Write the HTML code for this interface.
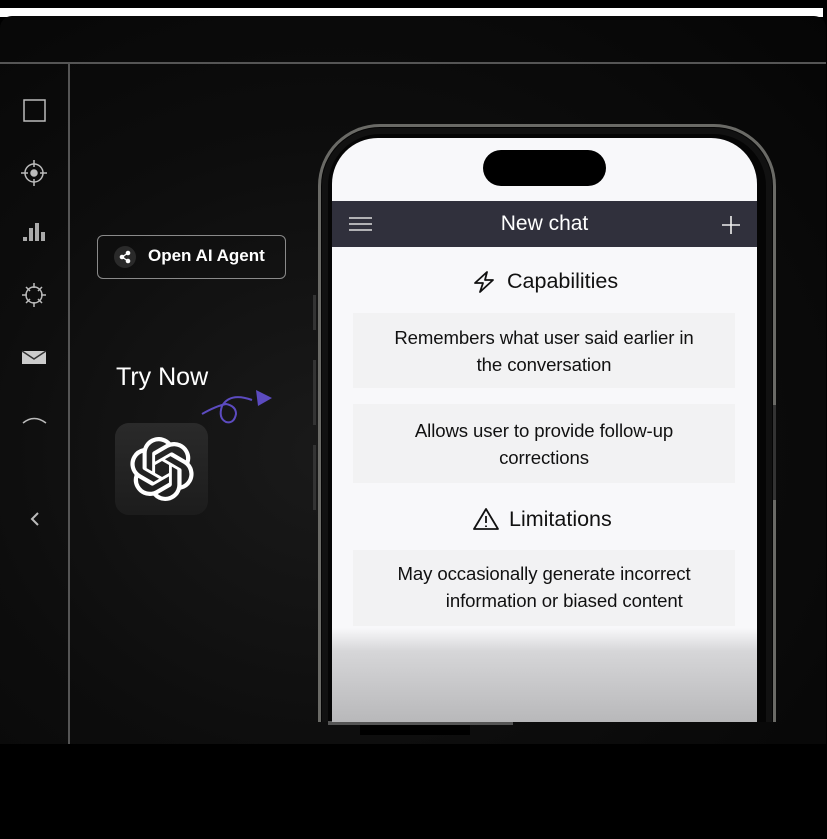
<!DOCTYPE html><html><head><style>
*{margin:0;padding:0;box-sizing:border-box}
body{width:827px;height:839px;background:#000;position:relative;overflow:hidden;font-family:"Liberation Sans",sans-serif}
.abs{position:absolute}
.card{left:0;top:16px;width:826px;height:728px;border-radius:12px 12px 0 0;background:radial-gradient(ellipse at 40% 60%,#1a1a1a 0%,#0d0d0d 50%,#050505 100%);overflow:hidden}
.screen{left:332px;top:138px;width:425px;height:584px;background:#f8f8fa;border-radius:46px 46px 0 0;overflow:hidden}
.box{position:absolute;left:21px;width:382px;background:#f2f2f3;text-align:center;color:#111;font-size:18.6px;line-height:27px;letter-spacing:-0.1px}
</style></head><body>
<div class="abs" style="left:0;top:8px;width:823px;height:9px;background:#fff"></div>
<div class="abs card"></div>
<div class="abs" style="left:0;top:62px;width:826px;height:2px;background:#555"></div>
<div class="abs" style="left:68px;top:63px;width:2px;height:681px;background:#555"></div>
<svg class="abs" style="left:0;top:90px" width="70" height="450" fill="none" stroke="#bbb" stroke-width="1.5">
<rect x="24" y="10" width="21" height="21"/>
<circle cx="34" cy="83" r="9"/><circle cx="34" cy="83" r="3" fill="#bbb"/><path d="M34 70v7M34 89v7M21 83h7M40 83h7"/>
<path d="M25 151v-4M31 151v-13M37 151v-18M43 151v-9" stroke-width="4" stroke="#aaa"/>
<circle cx="34" cy="205" r="8"/><path d="M34 193v5M34 212v5M22 205h5M41 205h5M26 197l4 4M42 197l-4 4M26 213l4-4M42 213l-4-4"/>
<path d="M22 261h24v13H22z" fill="#ccc" stroke="none"/><path d="M22 261l12 8 12-8" stroke="#333"/>
<path d="M23 333q11-9 23 0"/>
<path d="M38 423l-6 6 6 6" stroke-width="2"/>
</svg>
<div class="abs" style="left:97px;top:235px;width:189px;height:44px;border:1.5px solid #8a8a8a;border-radius:6px"></div>
<div class="abs" style="left:114px;top:246px;width:22px;height:22px;border-radius:50%;background:#2a2a2a"></div>
<svg class="abs" style="left:114px;top:246px" width="22" height="22"><circle cx="14" cy="7" r="2.3" fill="#fff"/><circle cx="8" cy="11" r="2.3" fill="#fff"/><circle cx="14" cy="15" r="2.3" fill="#fff"/><path d="M14 7L8 11L14 15" stroke="#fff" stroke-width="1.3" fill="none"/></svg>
<div class="abs" style="left:148px;top:246px;color:#fff;font-weight:bold;font-size:17px">Open AI Agent</div>
<div class="abs" style="left:116px;top:363px;color:#fff;font-size:25px">Try Now</div>
<svg class="abs" style="left:198px;top:380px" width="80" height="50" fill="none" stroke="#5c4bc0" stroke-width="2"><path d="M4 34q14-8 24-10q10 2 10 10q-2 10-10 8q-8-4-4-16q8-14 30-6"/><path d="M58 10l16 8-14 8z" fill="#5c4bc0" stroke="none"/></svg>
<div class="abs" style="left:115px;top:423px;width:93px;height:92px;border-radius:14px;background:linear-gradient(#2a2a2a,#1c1c1c)"></div>
<svg class="abs" style="left:130px;top:437px" width="64" height="64" viewBox="0 0 24 24"><path fill="#fff" d="M22.28 9.820a5.98 5.98 0 0 0-.52-4.91 6.05 6.05 0 0 0-6.51-2.9A6.070 6.070 0 0 0 4.980 4.180a5.98 5.98 0 0 0-4 2.9 6.05 6.05 0 0 0 .74 7.1 5.98 5.98 0 0 0 .51 4.91 6.05 6.05 0 0 0 6.52 2.9A5.98 5.98 0 0 0 13.26 24a6.06 6.06 0 0 0 5.77-4.21 5.99 5.99 0 0 0 4-2.9 6.06 6.06 0 0 0-.75-7.07zm-9.02 12.61a4.48 4.48 0 0 1-2.88-1.04l.14-.08 4.78-2.76a.8.8 0 0 0 .39-.68v-6.74l2.02 1.17a.07.07 0 0 1 .04.05v5.58a4.5 4.5 0 0 1-4.49 4.5zm-9.66-4.13a4.47 4.47 0 0 1-.53-3.01l.14.09 4.78 2.76a.77.77 0 0 0 .78 0l5.84-3.37v2.33a.08.08 0 0 1-.03.06L9.74 19.95a4.5 4.5 0 0 1-6.14-1.65zM2.34 7.9a4.49 4.49 0 0 1 2.37-1.97v5.68a.77.77 0 0 0 .39.68l5.81 3.35-2.02 1.17a.08.08 0 0 1-.07 0l-4.83-2.79A4.5 4.5 0 0 1 2.34 7.87zm16.6 3.86L13.1 8.36 15.12 7.2a.08.08 0 0 1 .07 0l4.83 2.79a4.49 4.49 0 0 1-.68 8.1v-5.68a.79.79 0 0 0-.41-.67zm2.01-3.02l-.14-.09-4.77-2.78a.78.78 0 0 0-.79 0L9.41 9.23V6.9a.07.07 0 0 1 .03-.06l4.83-2.79a4.5 4.5 0 0 1 6.68 4.66zM8.31 12.86l-2.02-1.16a.08.08 0 0 1-.04-.06V6.08a4.5 4.5 0 0 1 7.38-3.45l-.14.08-4.78 2.76a.8.8 0 0 0-.39.68zm1.1-2.37l2.6-1.5 2.61 1.5v3l-2.6 1.5-2.61-1.5z"/></svg>
<!-- phone -->
<div class="abs" style="left:318px;top:124px;width:458px;height:598px;border-radius:62px 62px 0 0;border:3px solid #6a6a66;border-bottom:none;background:#050505"></div>
<div class="abs" style="left:322px;top:128px;width:450px;height:594px;border-radius:58px 58px 0 0;border:6px solid #111;border-bottom:none"></div>
<div class="abs" style="left:328px;top:721px;width:185px;height:4px;background:#555"></div>
<div class="abs" style="left:360px;top:725px;width:110px;height:10px;background:#000"></div>
<div class="abs screen">
<div class="abs" style="left:151px;top:12px;width:123px;height:36px;border-radius:18px;background:#000"></div>
<div class="abs" style="left:0;top:63px;width:425px;height:46px;background:#30303c"></div>
<svg class="abs" style="left:16px;top:78px" width="26" height="16" stroke="#ddd" stroke-width="1.6"><path d="M1 2h23M1 8h23M1 14h23"/></svg>
<div class="abs" style="left:0;top:74px;width:425px;text-align:center;color:#fff;font-size:21px">New chat</div>
<svg class="abs" style="left:389px;top:77px" width="20" height="20" stroke="#eee" stroke-width="1.6"><path d="M10 1v18M1 10h18"/></svg>
<svg class="abs" style="left:140px;top:132px" width="24" height="24" fill="none" stroke="#111" stroke-width="1.8" stroke-linejoin="round"><path d="M15 2L3 13h8l-3 9 13-12h-8z"/></svg>
<div class="abs" style="left:175px;top:131px;font-size:21.5px;color:#111">Capabilities</div>
<div class="box" style="top:175px;height:75px;padding-top:11px">Remembers what user said earlier in<br>the conversation</div>
<div class="box" style="top:266px;height:79px;padding-top:13px">Allows user to provide follow-up<br>corrections</div>
<svg class="abs" style="left:141px;top:369px" width="26" height="24" fill="none" stroke="#111" stroke-width="1.8" stroke-linejoin="round"><path d="M13 2L1 22h24z"/><path d="M13 9v7M13 18.5v1.5"/></svg>
<div class="abs" style="left:177px;top:369px;font-size:21.5px;color:#111">Limitations</div>
<div class="box" style="top:412px;height:76px;padding-top:10px">May occasionally generate incorrect<br>&nbsp;&nbsp;&nbsp;&nbsp;&nbsp;&nbsp;&nbsp;&nbsp;information or biased content</div>
<div class="abs" style="left:0;top:490px;width:425px;height:94px;background:linear-gradient(#f8f8fa,#d6d6d8 25%,#c8c8ca 60%,#b8b8ba)"></div>
</div>
<div class="abs" style="left:313px;top:295px;width:3px;height:35px;background:#333"></div>
<div class="abs" style="left:313px;top:360px;width:3px;height:65px;background:#333"></div>
<div class="abs" style="left:313px;top:445px;width:3px;height:65px;background:#333"></div>
<div class="abs" style="left:773px;top:405px;width:3px;height:95px;background:#333"></div>
</body></html>
